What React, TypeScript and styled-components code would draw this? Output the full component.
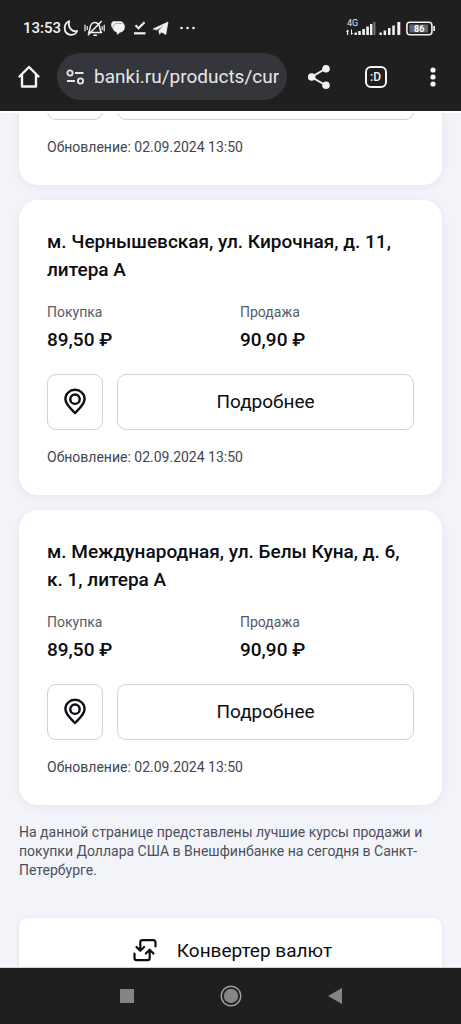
import React from "react";
import styled, { createGlobalStyle } from "styled-components";

const GlobalStyle = createGlobalStyle`
  * { box-sizing: border-box; }
  body {
    margin: 0;
    background: #f3f4f9;
    color: #0b0d12;
    font-family: Roboto, "Liberation Sans", sans-serif;
  }
  button, input { font-family: inherit; }
`;

const Screen = styled.div`
  display: flex;
  flex-direction: column;
  height: 100vh;
  overflow: hidden;
`;

const Header = styled.header`
  flex: none;
  background: #1f1f1f;
  color: #f2f2f2;
  padding-bottom: 11px;
`;

const StatusBar = styled.div`
  display: flex;
  align-items: center;
  justify-content: space-between;
  height: 53px;
  padding: 3px 25px 0 23px;
`;

const StatusGroup = styled.div`
  display: flex;
  align-items: center;
  gap: 2px;
`;

const Clock = styled.time`
  font-size: 15px;
  line-height: 20px;
  font-weight: 500;
`;

const Toolbar = styled.div`
  display: flex;
  align-items: center;
  height: 47px;
`;

const ToolButton = styled.button`
  display: flex;
  align-items: center;
  justify-content: center;
  flex: none;
  width: 57px;
  height: 47px;
  padding: 0;
  border: 0;
  background: none;
  color: inherit;
`;

const Address = styled.label`
  display: flex;
  align-items: center;
  flex: 1;
  min-width: 0;
  height: 47px;
  gap: 9px;
  margin-right: 3px;
  padding: 0 8px 0 9px;
  border-radius: 24px;
  background: #35363b;
`;

const AddressInput = styled.input`
  flex: 1;
  min-width: 0;
  padding: 0;
  border: 0;
  outline: 0;
  background: none;
  color: #e6e6e8;
  font-size: 19px;
  line-height: 24px;
`;

const Main = styled.main`
  flex: 1;
  min-height: 0;
  overflow: hidden;
  padding: 0 19px;
  border-top: 2px solid #fff;
  border-bottom: 1px solid #d4d4d6;
`;

const OfficeList = styled.div`
  display: flex;
  flex-direction: column;
  gap: 15px;
  margin-top: -77px;
`;

const Card = styled.article`
  padding: 28px;
  border-radius: 19px;
  background: #fff;
  box-shadow: 0 2px 12px rgba(30, 34, 60, 0.06);
`;

const OfficeTitle = styled.h2`
  margin: 0 0 18px;
  font-size: 19px;
  line-height: 28px;
  font-weight: 500;
`;

const Rates = styled.dl`
  display: grid;
  grid-template-columns: 1fr 1fr;
  gap: 19px;
  margin: 0 0 20px;
`;

const RateLabel = styled.dt`
  margin-bottom: 4px;
  color: #565b66;
  font-size: 14px;
  line-height: 20px;
`;

const RateValue = styled.dd`
  margin: 0;
  font-size: 19px;
  line-height: 28px;
  font-weight: 500;
`;

const Actions = styled.div`
  display: flex;
  gap: 14px;
  margin-bottom: 17px;
`;

const OutlineButton = styled.button<{ $square?: boolean }>`
  display: flex;
  align-items: center;
  justify-content: center;
  flex: ${(p) => (p.$square ? "none" : "1")};
  width: ${(p) => (p.$square ? "56px" : "auto")};
  height: 56px;
  padding: 0;
  border: 1px solid #d2d2d7;
  border-radius: 9px;
  background: #fff;
  color: inherit;
  font-size: 19px;
  line-height: 28px;
`;

const Updated = styled.p`
  margin: 0;
  color: #42464f;
  font-size: 14px;
  line-height: 20px;
`;

const Note = styled.p`
  margin: 18px 0 38px;
  color: #4b505b;
  font-size: 14px;
  line-height: 19px;
`;

const ConverterLink = styled.a`
  display: flex;
  align-items: center;
  justify-content: center;
  gap: 20px;
  height: 66px;
  padding-left: 4px;
  border-radius: 9px;
  background: #fff;
  box-shadow: 0 1px 4px rgba(30, 34, 60, 0.1);
  color: inherit;
  font-size: 19px;
  line-height: 28px;
  text-decoration: none;
`;

const SystemNav = styled.nav`
  display: flex;
  align-items: center;
  justify-content: center;
  gap: 64px;
  flex: none;
  height: 56px;
  background: #1f1f1f;
`;

const NavButton = styled.button`
  display: flex;
  align-items: center;
  justify-content: center;
  width: 40px;
  height: 40px;
  padding: 0;
  border: 0;
  background: none;
`;

const NotificationIcons = () => (
  <svg width="133" height="20" viewBox="0 0 133 20" fill="none" stroke="#f2f2f2" strokeWidth="1.8" strokeLinecap="round" strokeLinejoin="round">
    <path d="M6.200 3.200C1.600 5 .9 9.800 2.200 13.200C4.800 18 12 18 14.200 13C9.500 14.300 4.600 9.800 6.200 3.200Z" />
    <path d="M25.500 14.500C27.300 13 26.300 8.300 28.600 6C31 3.400 35.500 4.600 36.500 8C37 11 37 13.300 38.500 14.500Z" strokeWidth="1.500" />
    <path d="M31 17.300H33.500M25.300 16.800L38.300 3.500" strokeWidth="1.600" />
    <path d="M22 7.200V12.800M41.200 7.200V12.800M24.200 8.500V11.500M39.200 8.500V11.500" strokeWidth="1.200" />
    <path d="M51 3.600H57C59 3.600 60 4.500 60.500 5.800C61.800 7 61.800 9.500 61.300 11C60.500 13 59 14 57 14.200L54.500 16.500L53.800 14C51.500 13.500 50.300 12 50 10.500C48.700 9.500 48 7 48.500 5.500C48.900 4.200 50 3.600 51 3.600Z" fill="#f2f2f2" strokeWidth=".5" />
    <path d="M50 9C50 7 51.500 5.600 53.500 5.500H59" stroke="#777" strokeWidth=".6" />
    <path d="M72.500 7.300L75.500 10.200L81.500 4.300" strokeWidth="2.200" strokeLinecap="butt" strokeLinejoin="miter" />
    <path d="M71 15.300H82.500" strokeWidth="2.200" strokeLinecap="butt" />
    <path d="M90.500 10.800L105 4L102.800 16.500L98.500 14L96.500 16.200L95.800 12.500L101.500 7L93.800 11.800Z" fill="#f2f2f2" strokeWidth=".7" />
    <g fill="#f2f2f2" stroke="none">
      <circle cx="118.500" cy="10" r="1.300" />
      <circle cx="124.500" cy="10" r="1.300" />
      <circle cx="130.500" cy="10" r="1.300" />
    </g>
  </svg>
);

const SignalText = styled.text`
  font: 400 9px Roboto, sans-serif;
  fill: #e6e6e6;
`;

const BatteryText = styled.text`
  font: 700 9px Roboto, sans-serif;
  fill: #fff;
`;

const ConnectionIcons = () => (
  <svg width="90" height="20" viewBox="0 0 90 20" fill="#f2f2f2">
    <SignalText x="1" y="8">4G</SignalText>
    <path d="M1.500 11.500L3.200 13.500H2.200V17H1V14H0ZM5 11.500H6V15H7.200L5.500 17L4.400 15.500H5Z" />
    <path d="M8.500 14.500h2.400v2.500h-2.400zM12.200 13h2.600v4h-2.600zM16.300 11h2.600v6h-2.600zM20.300 8.500h2.600v8.500h-2.600zM24 6h2.400v11h-2.400z" />
    <path d="M27.400 4h2v13h-2z" opacity=".4" />
    <path d="M33.500 14.500h2.300v2.500h-2.300zM37.600 12.500h2.500v4.500h-2.500zM42 10h2.500v7h-2.500zM46.300 7.500h2.500v9.500h-2.500zM51.300 4h3v13h-3z" />
    <rect x="60.900" y="4.200" width="25" height="12.600" rx="3" fill="none" stroke="#f2f2f2" strokeWidth="1.600" />
    <rect x="63.500" y="6.500" width="18.500" height="8" fill="#666" />
    <path d="M87.300 8h1.700v5h-1.700z" />
    <BatteryText x="68" y="14">86</BatteryText>
  </svg>
);

const HomeIcon = () => (
  <svg width="24" height="24" viewBox="0 0 24 24" fill="none" stroke="#f5f5f5" strokeWidth="2.400" strokeLinejoin="round" strokeLinecap="round">
    <path d="M2.500 11.500L12 2L21.500 11.500M5 10V21.500H19V10" />
  </svg>
);

const SiteSettingsIcon = () => (
  <svg width="19" height="16" viewBox="0 0 19 16" fill="none" stroke="#e6e6e8" strokeWidth="1.900">
    <circle cx="4" cy="4" r="2.600" />
    <path d="M9 4H17.500M1 12H9" />
    <circle cx="14.500" cy="12" r="2.600" />
  </svg>
);

const ShareIcon = () => (
  <svg width="24" height="26" viewBox="0 0 24 26" fill="#f2f2f2" stroke="#f2f2f2" strokeWidth="2">
    <path d="M19 4.500L4.500 13L19 21.500" fill="none" />
    <circle cx="19" cy="4.700" r="2.800" />
    <circle cx="4.700" cy="13" r="2.800" />
    <circle cx="19" cy="21.300" r="2.800" />
  </svg>
);

const TabsFrame = styled.span`
  display: flex;
  align-items: center;
  justify-content: center;
  width: 22px;
  height: 22px;
  border: 2px solid #f5f5f5;
  border-radius: 6px;
  font-size: 12px;
  line-height: 12px;
  font-weight: 500;
`;

const MoreIcon = () => (
  <svg width="6" height="22" viewBox="0 0 6 22" fill="#f5f5f5">
    <circle cx="3" cy="4" r="2.600" />
    <circle cx="3" cy="11" r="2.600" />
    <circle cx="3" cy="18" r="2.600" />
  </svg>
);

const PinIcon = () => (
  <svg width="24" height="28" viewBox="0 0 24 28" fill="none" stroke="#0b0d12" strokeWidth="2.400" strokeLinejoin="round">
    <path d="M12 25C10 22.500 2.400 16.800 2.400 11A9.600 9.200 0 0 1 21.600 11C21.600 16.800 14 22.500 12 25Z" />
    <circle cx="12" cy="11.200" r="4.700" />
  </svg>
);

const ConvertIcon = () => (
  <svg width="24" height="24" viewBox="0 0 24 24" fill="none" stroke="#0b0d12" strokeWidth="2.200" strokeLinecap="round" strokeLinejoin="round">
    <path d="M22.500 7.500V3.400Q22.500 1.200 20.300 1.200H9.500Q7.300 1.200 7.300 3.400V11.500M3.500 8L7.300 11.800L11.100 8" />
    <path d="M1.500 14.500V19Q1.500 21.200 3.700 21.200H14.500Q16.700 21.200 16.700 19V11M12.900 14.500L16.700 10.700L20.500 14.500" />
  </svg>
);

interface Office {
  address?: string;
  buy?: string;
  sell?: string;
  updated: string;
}

const offices: Office[] = [
  { updated: "02.09.2024 13:50" },
  { address: "м. Чернышевская, ул. Кирочная, д. 11, литера А", buy: "89,50 ₽", sell: "90,90 ₽", updated: "02.09.2024 13:50" },
  { address: "м. Международная, ул. Белы Куна, д. 6, к. 1, литера А", buy: "89,50 ₽", sell: "90,90 ₽", updated: "02.09.2024 13:50" },
];

const OfficeCard = ({ address, buy, sell, updated }: Office) => (
  <Card>
    {address && <OfficeTitle>{address}</OfficeTitle>}
    {buy && sell && (
      <Rates>
        <div>
          <RateLabel>Покупка</RateLabel>
          <RateValue>{buy}</RateValue>
        </div>
        <div>
          <RateLabel>Продажа</RateLabel>
          <RateValue>{sell}</RateValue>
        </div>
      </Rates>
    )}
    <Actions>
      <OutlineButton $square type="button" aria-label="На карте">
        <PinIcon />
      </OutlineButton>
      <OutlineButton type="button" aria-label={address ? undefined : "Подробнее"}>
        {address && "Подробнее"}
      </OutlineButton>
    </Actions>
    <Updated>Обновление: {updated}</Updated>
  </Card>
);

export default function App() {
  return (
    <Screen>
      <GlobalStyle />
      <Header>
        <StatusBar>
          <StatusGroup>
            <Clock>13:53</Clock>
            <NotificationIcons />
          </StatusGroup>
          <ConnectionIcons />
        </StatusBar>
        <Toolbar>
          <ToolButton type="button" aria-label="Домой">
            <HomeIcon />
          </ToolButton>
          <Address>
            <SiteSettingsIcon />
            <AddressInput aria-label="Адрес" defaultValue="banki.ru/products/cur" />
          </Address>
          <ToolButton type="button" aria-label="Поделиться">
            <ShareIcon />
          </ToolButton>
          <ToolButton type="button" aria-label="Вкладки">
            <TabsFrame>:D</TabsFrame>
          </ToolButton>
          <ToolButton type="button" aria-label="Меню">
            <MoreIcon />
          </ToolButton>
        </Toolbar>
      </Header>
      <Main>
        <OfficeList>
          {offices.map((office, i) => (
            <OfficeCard key={i} {...office} />
          ))}
        </OfficeList>
        <Note>
          На данной странице представлены лучшие курсы продажи и покупки Доллара США в Внешфинбанке на сегодня в
          Санкт-Петербурге.
        </Note>
        <ConverterLink href="#converter">
          <ConvertIcon />
          Конвертер валют
        </ConverterLink>
      </Main>
      <SystemNav>
        <NavButton type="button" aria-label="Недавние">
          <svg width="14" height="14" viewBox="0 0 14 14">
            <rect width="14" height="14" fill="#858585" />
          </svg>
        </NavButton>
        <NavButton type="button" aria-label="Главный экран">
          <svg width="22" height="22" viewBox="0 0 22 22">
            <circle cx="11" cy="11" r="9.800" fill="none" stroke="#a0a0a0" strokeWidth="1.500" />
            <circle cx="11" cy="11" r="7.200" fill="#858585" />
          </svg>
        </NavButton>
        <NavButton type="button" aria-label="Назад">
          <svg width="14" height="16" viewBox="0 0 14 16">
            <path d="M0 8L14 0V16Z" fill="#858585" />
          </svg>
        </NavButton>
      </SystemNav>
    </Screen>
  );
}
